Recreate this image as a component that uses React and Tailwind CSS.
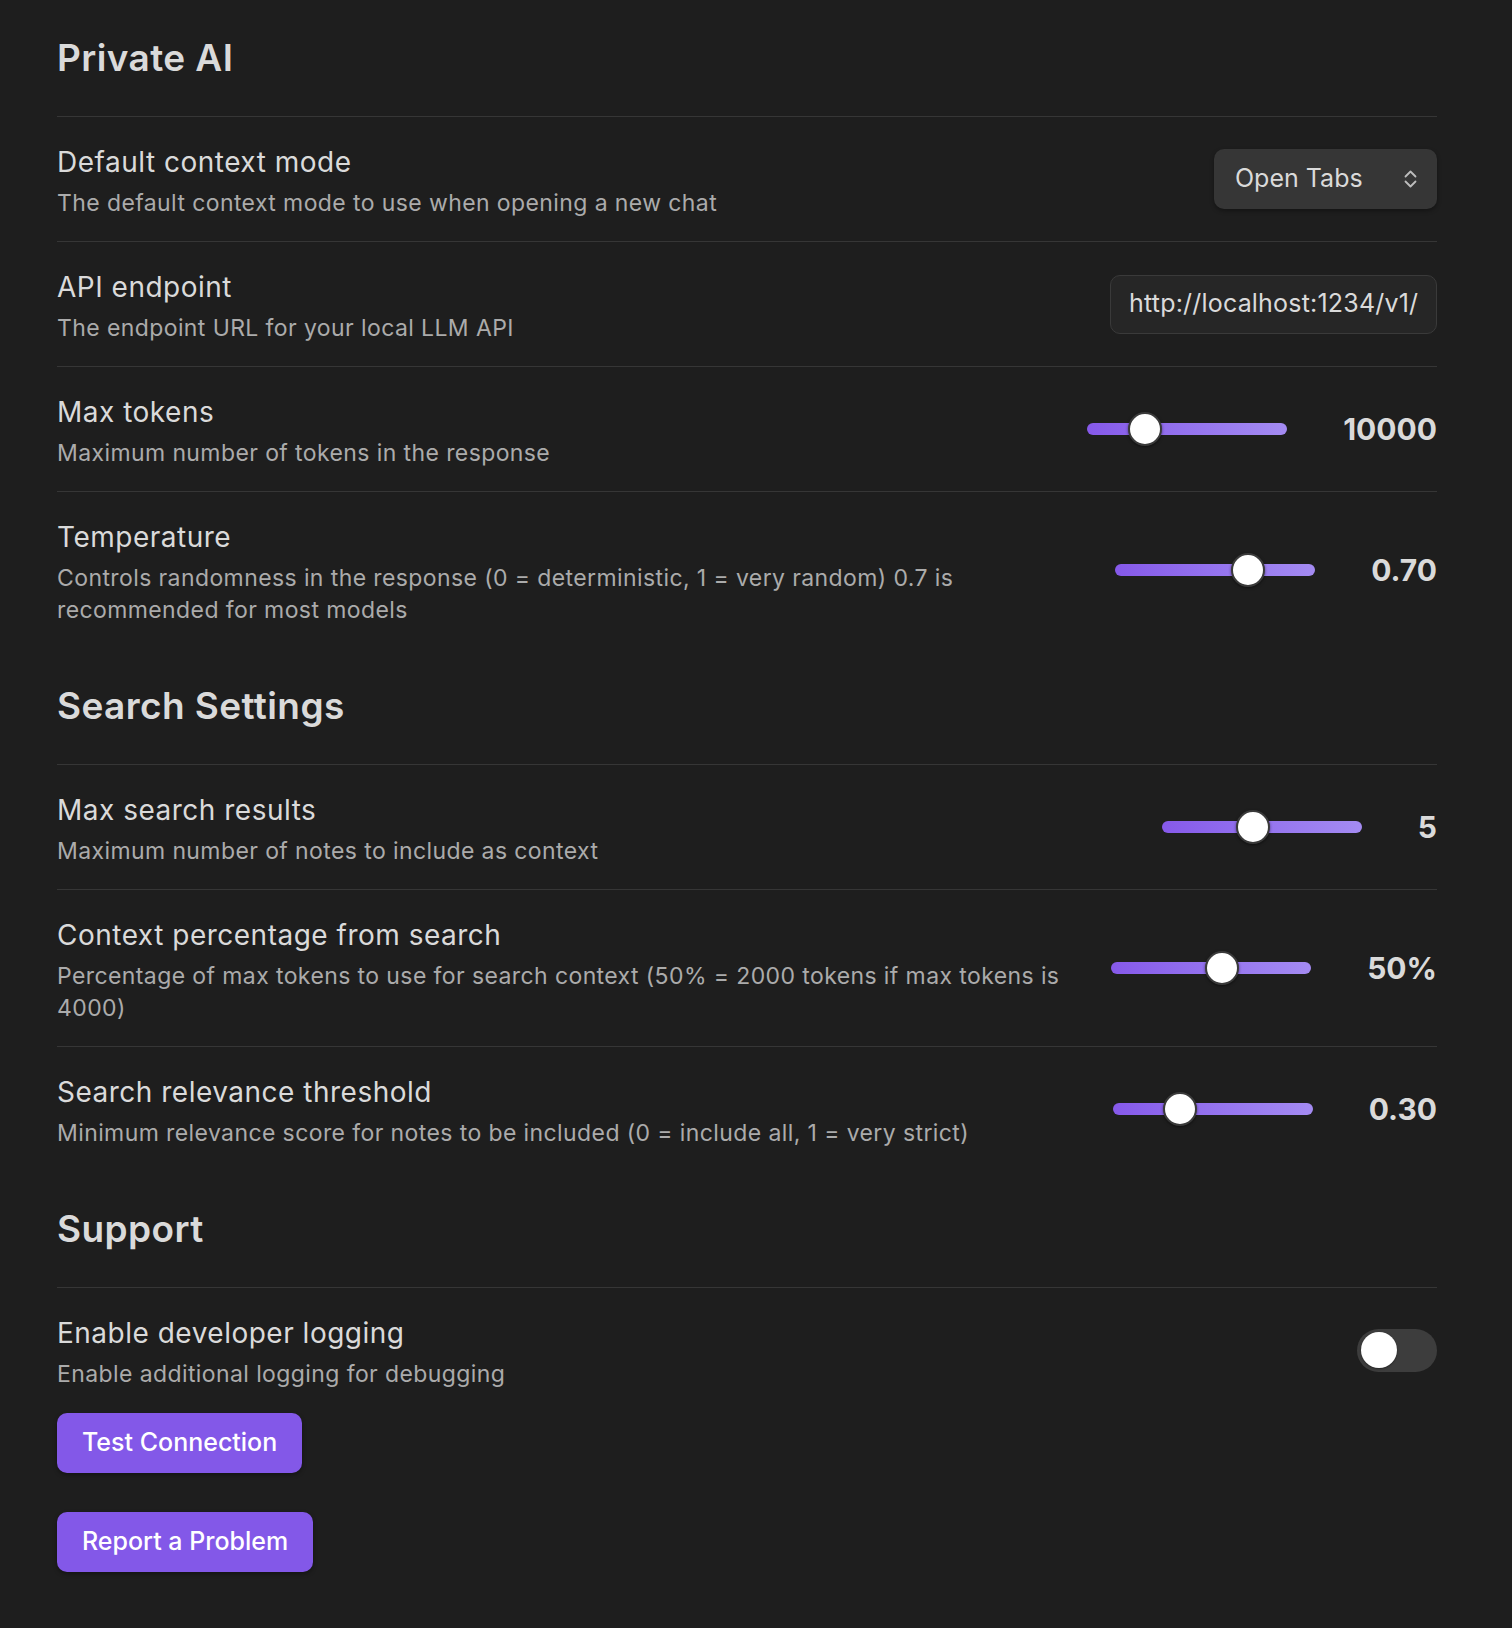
import React from 'react'

const SLIDERS = {
  maxTokens: { value: '10000', pos: 0.247 },
  temperature: { value: '0.70', pos: 0.7 },
  searchResults: { value: '5', pos: 0.444 },
  contextPct: { value: '50%', pos: 0.566 },
  relevance: { value: '0.30', pos: 0.3 },
}

function Heading({ children }) {
  return (
    <div className="pt-[34px] pb-[34px] text-[37px] leading-[48px] font-semibold tracking-[0.4px] text-[#dadada]">
      {children}
    </div>
  )
}

function Row({ name, desc, children }) {
  return (
    <div className="flex items-center border-t border-[#363636] pt-[25px] pb-[22px]">
      <div className="flex-1 min-w-0 mr-[28px]">
        <div className="text-[28px] leading-[40px] tracking-[0.5px] text-[#dadada]">{name}</div>
        <div className="mt-[5px] text-[23px] leading-[32px] tracking-[0.4px] text-[#ababab]">{desc}</div>
      </div>
      <div className="shrink-0 flex items-center -mt-[3px]">{children}</div>
    </div>
  )
}

function Slider({ value, pos }) {
  return (
    <div className="flex items-center gap-[56px]">
      <div className="relative w-[200px] h-[12px] rounded-full bg-gradient-to-r from-[#8659ea] to-[#a48bf2]">
        <div
          className="absolute top-1/2 -translate-y-1/2 w-[34px] h-[34px] rounded-full bg-white border-2 border-[#3a3a3a] shadow-[0_1px_3px_rgba(0,0,0,0.5)]"
          style={{ left: `${pos * 166}px` }}
        />
      </div>
      <span className="text-[30px] leading-[40px] font-bold text-[#dadada]">{value}</span>
    </div>
  )
}

function Dropdown() {
  return (
    <div className="w-[223px] h-[60px] flex items-center justify-between pl-[21px] pr-[19px] rounded-[10px] bg-[#363636] shadow-[0_2px_4px_rgba(0,0,0,0.35)] text-[25px] text-[#dadada]">
      <span>Open Tabs</span>
      <svg width="15" height="20" viewBox="0 0 15 20" fill="none" stroke="#bdbdbd" strokeWidth="1.8" strokeLinecap="round" strokeLinejoin="round">
        <path d="M2.5 7.5 L7.5 2.5 L12.5 7.5" />
        <path d="M2.5 12.5 L7.5 17.5 L12.5 12.5" />
      </svg>
    </div>
  )
}

function Toggle() {
  return (
    <div className="w-[80px] h-[43px] rounded-full bg-[#3d3d3d] flex items-center pl-[4px]">
      <div className="w-[36px] h-[36px] rounded-full bg-white shadow-[0_1px_2px_rgba(0,0,0,0.4)]" />
    </div>
  )
}

export default function App() {
  return (
    <div className="min-h-screen bg-[#1e1e1e] pl-[57px] pr-[75px] pb-[55px] font-[Inter,'Noto_Sans',sans-serif] antialiased">
      <Heading>Private AI</Heading>

      <Row name="Default context mode" desc="The default context mode to use when opening a new chat">
        <Dropdown />
      </Row>

      <Row name="API endpoint" desc="The endpoint URL for your local LLM API">
        <div className="w-[327px] h-[59px] flex items-center px-[18px] rounded-[10px] bg-[#262626] border border-[#3a3a3a] text-[25px] tracking-[0.2px] text-[#dadada]">
          http://localhost:1234/v1/
        </div>
      </Row>

      <Row name="Max tokens" desc="Maximum number of tokens in the response">
        <Slider {...SLIDERS.maxTokens} />
      </Row>

      <Row
        name="Temperature"
        desc="Controls randomness in the response (0 = deterministic, 1 = very random) 0.7 is recommended for most models"
      >
        <Slider {...SLIDERS.temperature} />
      </Row>

      <Heading>Search Settings</Heading>

      <Row name="Max search results" desc="Maximum number of notes to include as context">
        <Slider {...SLIDERS.searchResults} />
      </Row>

      <Row
        name="Context percentage from search"
        desc="Percentage of max tokens to use for search context (50% = 2000 tokens if max tokens is 4000)"
      >
        <Slider {...SLIDERS.contextPct} />
      </Row>

      <Row
        name="Search relevance threshold"
        desc="Minimum relevance score for notes to be included (0 = include all, 1 = very strict)"
      >
        <Slider {...SLIDERS.relevance} />
      </Row>

      <Heading>Support</Heading>

      <Row name="Enable developer logging" desc="Enable additional logging for debugging">
        <Toggle />
      </Row>

      <div className="flex flex-col items-start gap-[39px] pt-[1px]">
        <button className="h-[60px] px-[25px] rounded-[10px] bg-[#8358e8] text-white text-[25px] font-medium shadow-[0_2px_4px_rgba(0,0,0,0.35)]">
          Test Connection
        </button>
        <button className="h-[60px] px-[25px] rounded-[10px] bg-[#8358e8] text-white text-[25px] font-medium shadow-[0_2px_4px_rgba(0,0,0,0.35)]">
          Report a Problem
        </button>
      </div>
    </div>
  )
}
